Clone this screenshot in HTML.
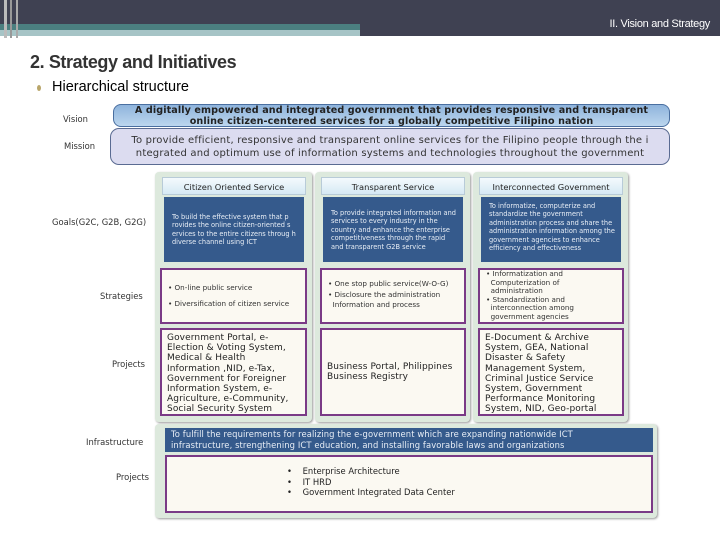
<!DOCTYPE html>
<html><head><meta charset="utf-8"><style>
*{margin:0;padding:0;box-sizing:border-box}
body{width:720px;height:540px;background:#fff;position:relative;overflow:hidden;font-family:"DejaVu Sans","Liberation Sans",sans-serif}
.a{position:absolute}
.lbl{position:absolute;font-size:8.4px;color:#333;white-space:nowrap}
.col{position:absolute;top:172px;height:250px;background:#dde9dd;border-radius:4px;box-shadow:1px 1px 2px #999}
.hd{position:absolute;top:177px;height:18px;background:linear-gradient(#f4fafd,#d6e9f4);font-size:8.3px;text-align:center;line-height:18px;color:#222;border:1px solid #b8cbd8;white-space:nowrap}
.gl{position:absolute;top:197px;height:65px;background:#355a8c;color:#e8eef6;font-size:6.6px;line-height:8.4px;padding:10px 4px 0 8px}
.st{position:absolute;top:268px;height:56px;background:#fbf9f2;border:2px solid #7a3a86;font-size:7.2px;line-height:9px;color:#333;padding:6px 6px;white-space:nowrap}
.pj{position:absolute;top:328px;height:88px;background:#fbf9f2;border:2px solid #7a3a86;font-size:9px;line-height:10.2px;color:#222;padding:3px 5px;letter-spacing:0.1px}
</style></head><body>
<div class="a" style="left:0;top:0;width:720px;height:36px;background:#3f4152"></div>
<div class="a" style="left:0;top:24px;width:360px;height:6px;background:#4b7f80"></div>
<div class="a" style="left:0;top:30px;width:360px;height:6px;background:#a6c4c6"></div>
<div class="a" style="left:4px;top:0;width:3px;height:38px;background:#bbb"></div>
<div class="a" style="left:10px;top:0;width:2px;height:38px;background:#999"></div>
<div class="a" style="left:16px;top:0;width:2px;height:38px;background:#aaa"></div>
<div class="a" style="right:10px;top:18px;color:#fff;font-family:'Liberation Sans',sans-serif;font-size:11px;letter-spacing:-0.3px">II. Vision and Strategy</div>
<div class="a" style="left:30px;top:52px;font-family:'Liberation Sans',sans-serif;font-weight:bold;font-size:18px;color:#333;letter-spacing:-0.4px">2. Strategy and Initiatives</div>
<div class="a" style="left:37px;top:85px;width:4px;height:6px;border-radius:50%;background:#b9a66a"></div>
<div class="a" style="left:52px;top:79px;font-family:'Liberation Sans',sans-serif;font-size:14.5px;color:#000">Hierarchical structure</div>

<div class="lbl" style="left:63px;top:114px">Vision</div>
<div class="lbl" style="left:64px;top:141px">Mission</div>
<div class="lbl" style="left:52px;top:217px">Goals(G2C, G2B, G2G)</div>
<div class="lbl" style="left:100px;top:291px">Strategies</div>
<div class="lbl" style="left:112px;top:359px">Projects</div>
<div class="lbl" style="left:86px;top:437px">Infrastructure</div>
<div class="lbl" style="left:116px;top:472px">Projects</div>

<div class="a" style="left:110px;top:128px;width:560px;height:37px;background:#dcdcf0;border:1px solid #5a6b92;border-radius:9px;font-size:10px;line-height:13px;color:#333;padding:5px 4px;text-align:center;white-space:nowrap;overflow:hidden;letter-spacing:0.2px">To provide efficient, responsive and transparent online services for the Filipino people through the i<br>ntegrated and optimum use of information systems and technologies throughout the government</div>
<div class="a" style="left:113px;top:104px;width:557px;height:23px;background:linear-gradient(#8fb4dc,#bcd6ee);border:1px solid #4a6fa0;border-radius:8px;font-size:9.6px;font-weight:bold;line-height:10.5px;color:#222;text-align:center;padding-top:1px;white-space:nowrap;letter-spacing:0.1px">A digitally empowered and integrated government that provides responsive and transparent<br>online citizen-centered services for a globally competitive Filipino nation</div>

<div class="col" style="left:155px;width:157px"></div>
<div class="col" style="left:315px;width:155px"></div>
<div class="col" style="left:473px;width:155px"></div>

<div class="hd" style="left:162px;width:144px">Citizen Oriented Service</div>
<div class="hd" style="left:321px;width:144px">Transparent Service</div>
<div class="hd" style="left:479px;width:144px">Interconnected Government</div>

<div class="gl" style="left:164px;width:140px;padding-top:16px">To build the effective system that p rovides the online citizen-oriented s ervices to the entire citizens throug h diverse channel using ICT</div>
<div class="gl" style="left:323px;width:140px;padding-top:12px">To provide integrated information and services to every industry in the country and enhance the enterprise competitiveness through the rapid and transparent G2B service</div>
<div class="gl" style="left:481px;width:140px;padding-top:5px">To informatize, computerize and standardize the government administration process and share the administration information among the government agencies to enhance efficiency and effectiveness</div>

<div class="st" style="left:160px;width:147px;padding-top:13px">• On-line public service<br><span style="display:block;height:7px"></span>• Diversification of citizen service</div>
<div class="st" style="left:320px;width:146px;padding-top:9px;line-height:10.5px">• One stop public service(W-O-G)<br>• Disclosure the administration<br>&nbsp;&nbsp;Information and process</div>
<div class="st" style="left:478px;width:146px;padding-top:0;line-height:8.6px">• Informatization and<br>&nbsp;&nbsp;Computerization of<br>&nbsp;&nbsp;administration<br>• Standardization and<br>&nbsp;&nbsp;interconnection among<br>&nbsp;&nbsp;government agencies</div>

<div class="pj" style="left:160px;width:147px">Government Portal, e-<br>Election &amp; Voting System,<br>Medical &amp; Health<br>Information ,NID, e-Tax,<br>Government for Foreigner<br>Information System, e-<br>Agriculture, e-Community,<br>Social Security System</div>
<div class="pj" style="left:320px;width:146px;padding-top:32px">Business Portal, Philippines<br>Business Registry</div>
<div class="pj" style="left:478px;width:146px">E-Document &amp; Archive<br>System, GEA, National<br>Disaster &amp; Safety<br>Management System,<br>Criminal Justice Service<br>System, Government<br>Performance Monitoring<br>System, NID, Geo-portal</div>

<div class="a" style="left:155px;top:424px;width:502px;height:94px;background:#dde9dd;border-radius:4px;box-shadow:1px 1px 2px #999"></div>
<div class="a" style="left:165px;top:428px;width:488px;height:24px;background:#355a8c;color:#e8eef6;font-size:8.4px;line-height:10.5px;padding:1px 6px;white-space:nowrap;letter-spacing:0.1px">To fulfill the requirements for realizing the e-government which are expanding nationwide ICT<br>infrastructure, strengthening ICT education, and installing favorable laws and organizations</div>
<div class="a" style="left:165px;top:455px;width:488px;height:58px;background:#fbf9f2;border:2px solid #7a3a86;font-size:8.4px;line-height:10.5px;color:#222;padding:9px 0 0 120px">•&nbsp;&nbsp;&nbsp;&nbsp;Enterprise Architecture<br>•&nbsp;&nbsp;&nbsp;&nbsp;IT HRD<br>•&nbsp;&nbsp;&nbsp;&nbsp;Government Integrated Data Center</div>
</body></html>
